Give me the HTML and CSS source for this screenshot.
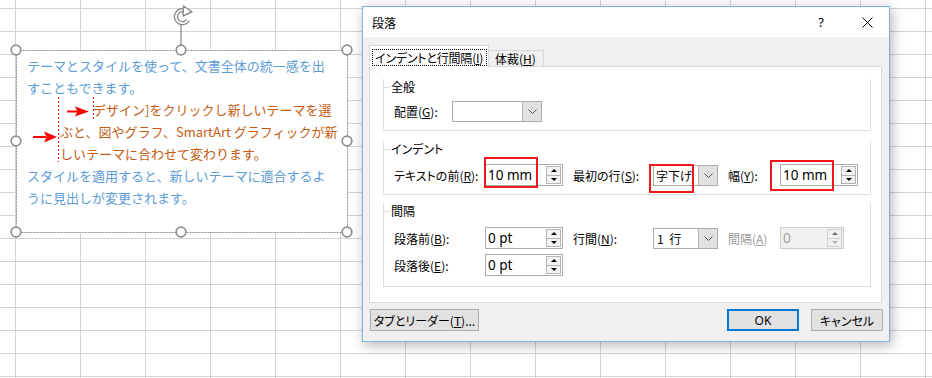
FILE: index.html
```html
<!DOCTYPE html>
<html lang="ja">
<head>
<meta charset="utf-8">
<title>段落</title>
<link rel="stylesheet" href="styles.css">
</head>
<body>
<div class="shape">
  <p class="blue">テーマとスタイルを使って、文書全体の統一感を出<br>すこともできます。</p>
  <p class="orange">デザイン]をクリックし新しいテーマを選<br>ぶと、図やグラフ、SmartArt グラフィックが新<br>しいテーマに合わせて変わります。</p>
  <p class="blue">スタイルを適用すると、新しいテーマに適合するよ<br>うに見出しが変更されます。</p>
</div>
<svg class="overlay" width="360" height="245" viewBox="0 0 360 245">
  <rect x="16.5" y="50.5" width="331" height="182" fill="none" stroke="#8d8d8d" stroke-dasharray="2 1"/>
  <line x1="181" y1="25" x2="181" y2="45" stroke="#8d8d8d" stroke-width="1.3"/>
  <path d="M185.5 11 A6.5 6.5 0 1 0 188 20" fill="none" stroke="#8d8d8d" stroke-width="4.4"/>
  <path d="M185.5 11 A6.5 6.5 0 1 0 188 20" fill="none" stroke="#fff" stroke-width="1.7"/>
  <path d="M183.5 6 L192 11.8 L183 16 Z" fill="#fff" stroke="#8d8d8d" stroke-width="1.5" stroke-linejoin="round"/>
  <g fill="#fff" stroke="#8d8d8d" stroke-width="1.7">
    <circle cx="16" cy="50" r="4.8"/>
    <circle cx="181" cy="50" r="4.8"/>
    <circle cx="347" cy="50" r="4.8"/>
    <circle cx="16" cy="141" r="4.8"/>
    <circle cx="347" cy="141" r="4.8"/>
    <circle cx="16" cy="232" r="4.8"/>
    <circle cx="181" cy="232" r="4.8"/>
    <circle cx="347" cy="232" r="4.8"/>
  </g>
  <g stroke="#f00" stroke-dasharray="2 2">
    <line x1="58.5" y1="97" x2="58.5" y2="162"/>
    <line x1="93.5" y1="97" x2="93.5" y2="121"/>
  </g>
  <g fill="#f00">
    <rect x="67" y="110.5" width="11" height="2"/>
    <path d="M75 106.5 L89 111.5 L75 116.5 L77.5 111.5 Z"/>
    <rect x="33" y="136" width="13" height="2"/>
    <path d="M44 131.5 L57 137 L44 142.5 L46.5 137 Z"/>
  </g>
</svg>

<div class="dialog">
  <div class="titlebar">
    <span class="title">段落</span>
    <span class="help">?</span>
    <svg class="close" width="11" height="11" viewBox="0 0 11 11"><path d="M0.5 0.5 L10.5 10.5 M10.5 0.5 L0.5 10.5" stroke="#000" stroke-width="1"/></svg>
  </div>
  <div class="dbody">
    <div class="tabs">
      <div class="tab tab-active"><span class="focus">インデントと行間隔(<u>I</u>)</span></div>
      <div class="tab tab-other">体裁(<u>H</u>)</div>
    </div>
    <div class="panel">
      <div class="group g-general">
        <div class="ghead"><span class="stub"></span><span class="gtitle">全般</span></div>
        <div class="row r-first5">
          <span class="lbl-align">配置(<u>G</u>):</span>
          <div class="combo w90"><span class="v"></span><span class="dd"><svg width="9" height="5" viewBox="0 0 9 5"><path d="M0.5 0.5 L4.5 4.5 L8.5 0.5" fill="none" stroke="#555"/></svg></span></div>
        </div>
      </div>
      <div class="group g-indent">
        <div class="ghead"><span class="stub"></span><span class="gtitle">インデント</span></div>
        <div class="row r-first7">
          <span class="l1">テキストの前(<u>R</u>):</span>
          <div class="spin"><span class="v">10 mm</span><span class="arrows"><span class="up"></span><span class="down"></span></span><span class="mark m1"></span></div>
          <span class="l2">最初の行(<u>S</u>):</span>
          <div class="combo w65"><span class="v">字下げ</span><span class="dd"><svg width="9" height="5" viewBox="0 0 9 5"><path d="M0.5 0.5 L4.5 4.5 L8.5 0.5" fill="none" stroke="#555"/></svg></span><span class="mark m2"></span></div>
          <span class="l3">幅(<u>Y</u>):</span>
          <div class="spin"><span class="v">10 mm</span><span class="arrows"><span class="up"></span><span class="down"></span></span><span class="mark m3"></span></div>
        </div>
      </div>
      <div class="group g-spacing">
        <div class="ghead"><span class="stub"></span><span class="gtitle">間隔</span></div>
        <div class="row r-first8">
          <span class="l1">段落前(<u>B</u>):</span>
          <div class="spin"><span class="v">0 pt</span><span class="arrows"><span class="up"></span><span class="down"></span></span></div>
          <span class="l2">行間(<u>N</u>):</span>
          <div class="combo w65"><span class="v spaced">1 行</span><span class="dd"><svg width="9" height="5" viewBox="0 0 9 5"><path d="M0.5 0.5 L4.5 4.5 L8.5 0.5" fill="none" stroke="#555"/></svg></span></div>
          <span class="l3 disabled">間隔(<u>A</u>)</span>
          <div class="spin spin-disabled w64"><span class="v">0</span><span class="arrows"><span class="up"></span><span class="down"></span></span></div>
        </div>
        <div class="row r-next">
          <span class="l1">段落後(<u>E</u>):</span>
          <div class="spin"><span class="v">0 pt</span><span class="arrows"><span class="up"></span><span class="down"></span></span></div>
        </div>
      </div>
    </div>
    <div class="btns">
      <div class="btn btn-tabs">タブとリーダー(<u>T</u>)...</div>
      <span class="spacer"></span>
      <div class="btn btn-ok">OK</div>
      <div class="btn btn-cancel">キャンセル</div>
    </div>
  </div>
</div>
</body>
</html>
```

FILE: styles.css
```css
html, body {
  margin: 0;
  padding: 0;
}
body {
  width: 932px;
  height: 378px;
  overflow: hidden;
  position: relative;
  background-color: #fff;
  background-image:
    linear-gradient(to right, #d4d4d4 1px, transparent 1px),
    linear-gradient(to bottom, #d4d4d4 1px, transparent 1px);
  background-size: 65px 100%, 100% 23px;
  background-position: 15px 0, 0 8px;
  font-family: "Noto Sans CJK JP", sans-serif;
}

/* text box on the sheet */
.shape {
  position: absolute;
  left: 16px;
  top: 50px;
  width: 331px;
  height: 182px;
  box-sizing: border-box;
  padding: 5px 0 0 11px;
  background: #fff;
  font-family: "Noto Sans CJK JP", sans-serif;
  font-size: 13px;
  line-height: 22px;
  white-space: nowrap;
}
.shape p {
  margin: 0;
}
.blue {
  color: #5b9bd5;
}
.orange {
  color: #c55a11;
  padding-left: 33px;
  text-indent: 33px;
}
.overlay {
  position: absolute;
  left: 0;
  top: 0;
  pointer-events: none;
}

/* dialog */
.dialog {
  position: absolute;
  left: 362px;
  top: 6px;
  width: 528px;
  height: 336px;
  box-sizing: border-box;
  border: 1px solid #7eb4ea;
  background: #f0f0f0;
  box-shadow: 2px 3px 12px rgba(0, 0, 0, 0.3);
  font-family: "Noto Sans CJK JP", sans-serif;
  font-size: 12px;
  font-feature-settings: "palt";
  color: #000;
}
.titlebar {
  height: 30px;
  background: #fff;
  display: flex;
  align-items: center;
  padding-left: 9px;
}
.title {
  flex: 1;
}
.help {
  width: 10px;
  text-align: center;
  margin-right: 36px;
  font-family: "Noto Sans", sans-serif;
  font-size: 13px;
}
.close {
  margin-right: 16px;
}
.dbody {
  padding: 8px 7px 0 6px;
}
.tabs {
  display: flex;
  align-items: flex-end;
  height: 22px;
  margin-bottom: -1px;
  position: relative;
  z-index: 1;
}
.tab {
  box-sizing: border-box;
  border: 1px solid #d9d9d9;
  border-bottom: none;
}
.tab-active {
  width: 120px;
  height: 22px;
  background: #fff;
  padding: 3px 1px 0 2px;
  position: relative;
  z-index: 2;
}
.focus {
  display: block;
  height: 17px;
  box-sizing: border-box;
  border: 1px dotted #000;
  line-height: 15px;
  padding-left: 2px;
  white-space: nowrap;
  letter-spacing: -0.2px;
}
.tab-other {
  width: 56px;
  height: 16px;
  margin-bottom: 1px;
  margin-left: -1px;
  background: #f0f0f0;
  padding-left: 6px;
  line-height: 15px;
}
.panel {
  height: 237px;
  box-sizing: border-box;
  background: #fff;
  border: 1px solid #d9d9d9;
  padding: 20px 10px 0 13px;
}
.group {
  border: 1px solid #dcdcdc;
  border-top: none;
  padding: 0 0 8px 10px;
}
.g-indent {
  margin-top: 18px;
}
.g-spacing {
  margin-top: 16px;
  padding-bottom: 10px;
}
.ghead {
  display: flex;
  align-items: center;
  height: 16px;
  margin: -8px 0 0 -11px;
}
.stub {
  width: 7px;
  height: 1px;
  background: #dcdcdc;
}
.gtitle {
  padding-left: 1px;
  line-height: 16px;
}
.row {
  display: flex;
  align-items: center;
  height: 22px;
}
.r-first5 { margin-top: 5px; }
.r-first7 { margin-top: 7px; }
.r-first8 { margin-top: 8px; }
.r-next { margin-top: 5px; }

.lbl-align { width: 58px; }
.l1 { width: 91px; }
.l2 { width: 80px; margin-left: 10px; }
.l3 { width: 52px; margin-left: 10px; }
.disabled { color: #9a9a9a; }

.spin {
  position: relative;
  display: flex;
  width: 78px;
  height: 22px;
  box-sizing: border-box;
  border: 1px solid #acacac;
  background: #fff;
}
.spin .v {
  flex: 1;
  padding-left: 2px;
  font-family: "Noto Sans", "Noto Sans CJK JP", sans-serif;
  font-size: 13.5px;
  line-height: 20px;
  font-feature-settings: normal;
}
.arrows {
  width: 15px;
  display: flex;
  flex-direction: column;
  margin: 1px 1px 1px 0;
}
.arrows span {
  flex: 1;
  box-sizing: border-box;
  border: 1px solid #b5b5b5;
  background: #f3f3f3;
  display: flex;
  align-items: center;
  justify-content: center;
}
.arrows .down {
  border-top: none;
}
.arrows .up::after,
.arrows .down::after {
  content: "";
  width: 0;
  height: 0;
  border-left: 3px solid transparent;
  border-right: 3px solid transparent;
}
.arrows .up::after {
  border-bottom: 3px solid #000;
}
.arrows .down::after {
  border-top: 3px solid #000;
}
.spin-disabled {
  background: #f0f0f0;
  border-color: #cccccc;
  color: #a0a0a0;
}
.spin-disabled .arrows span {
  border-color: #cfcfcf;
  background: #f0f0f0;
}
.spin-disabled .arrows .up::after {
  border-bottom-color: #6d6d6d;
}
.spin-disabled .arrows .down::after {
  border-top-color: #b0b0b0;
}
.w64 { width: 64px; }

.combo {
  position: relative;
  display: flex;
  height: 21px;
  box-sizing: border-box;
  border: 1px solid #acacac;
  background: #fff;
}
.w90 { width: 90px; }
.w65 { width: 65px; }
.combo .v {
  flex: 1;
  padding-left: 2px;
  line-height: 19px;
  font-size: 12px;
  white-space: pre;
  font-feature-settings: normal;
}
.combo .spaced {
  padding-left: 3px;
  word-spacing: 3px;
}
.combo .dd {
  width: 18px;
  background: #e1e1e1;
  border-left: 1px solid #b5b5b5;
  display: flex;
  align-items: center;
  justify-content: center;
}

.mark {
  position: absolute;
  box-sizing: border-box;
  border: 2px solid #f01818;
}
.m1 { left: -2px; top: -8px; width: 54px; height: 31px; }
.m2 { left: -5px; top: -2px; width: 45px; height: 29px; }
.m3 { left: -11px; top: -5px; width: 64px; height: 31px; }

.btns {
  display: flex;
  margin: 6px -1px 0 0;
  padding-left: 1px;
}
.btn {
  height: 22px;
  box-sizing: border-box;
  border: 1px solid #adadad;
  background: #e1e1e1;
  display: flex;
  align-items: center;
  justify-content: center;
  white-space: nowrap;
}
.btn-tabs { width: 109px; }
.spacer { flex: 1; }
.btn-ok {
  width: 72px;
  border: 2px solid #0078d7;
  font-family: "Noto Sans", sans-serif;
}
.btn-cancel {
  width: 72px;
  margin-left: 12px;
}
```
